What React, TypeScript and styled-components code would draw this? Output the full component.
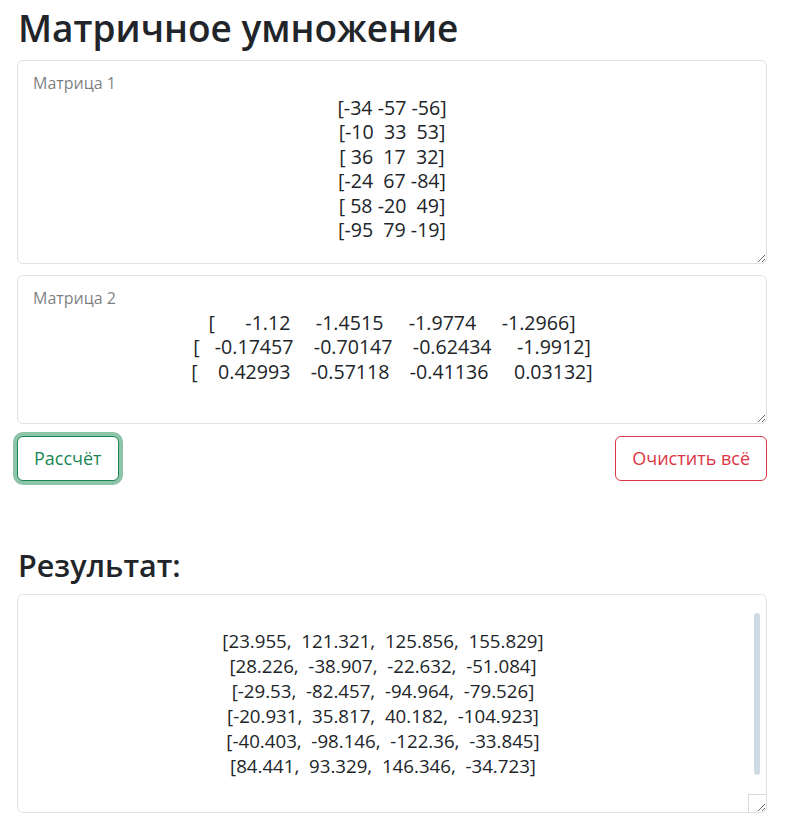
import React from "react";
import styled, { createGlobalStyle } from "styled-components";

const GlobalStyle = createGlobalStyle`
  html, body { margin: 0; padding: 0; background: #fff; }
  body {
    font-family: "Open Sans", "Noto Sans", sans-serif;
    color: #212529;
  }
  * { box-sizing: border-box; }
`;

const Page = styled.main`
  display: flex;
  flex-direction: column;
  padding: 0 20px 0 17px;
`;

const Title = styled.h1`
  margin: 4px 0 8px 1px;
  font-size: 37px;
  line-height: 48px;
  font-weight: 600;
  color: #212529;
`;

const SubTitle = styled.h2`
  margin: 63px 0 8px 1px;
  font-size: 30.5px;
  line-height: 42px;
  font-weight: 600;
  color: #212529;
`;

const Field = styled.div<{ $gap: number }>`
  position: relative;
  margin-bottom: ${(p) => p.$gap}px;
`;

const FieldLabel = styled.label`
  position: absolute;
  top: 13px;
  left: 16px;
  font-size: 16px;
  line-height: 20px;
  color: rgba(33, 37, 41, 0.6);
  pointer-events: none;
`;

const MatrixArea = styled.textarea<{ $height: number }>`
  display: block;
  width: 100%;
  height: ${(p) => p.$height}px;
  margin: 0;
  padding: 35px 12px 8px;
  border: 1px solid #dee2e6;
  border-radius: 6px;
  background: #fff;
  color: #212529;
  font-family: "Open Sans", "Noto Sans", sans-serif;
  font-size: 19.6px;
  line-height: 24.4px;
  text-align: center;
  white-space: pre-wrap;
  outline: none;
  overflow: auto;
`;

const ResultArea = styled.textarea`
  display: block;
  width: 100%;
  height: 219px;
  margin: 0;
  padding: 33px 30px 10px 12px;
  border: 1px solid #dee2e6;
  border-radius: 6px;
  background: #fff;
  color: #212529;
  font-family: "Open Sans", "Noto Sans", sans-serif;
  font-size: 18.7px;
  line-height: 25px;
  text-align: center;
  white-space: pre-wrap;
  outline: none;
  overflow: hidden;
`;

const ScrollThumb = styled.div`
  position: absolute;
  top: 19px;
  right: 7px;
  width: 6px;
  height: 162px;
  border-radius: 3px;
  background: #cfdbe3;
  pointer-events: none;
`;

const ScrollCorner = styled.div`
  position: absolute;
  right: 0;
  bottom: 0;
  width: 19px;
  height: 19px;
  border-top: 1px solid #d9d9d9;
  border-left: 1px solid #d9d9d9;
  pointer-events: none;
`;

const Actions = styled.div`
  display: flex;
  justify-content: space-between;
  align-items: center;
  margin-top: 12px;
`;

const OutlineButton = styled.button<{ $tone: "success" | "danger"; $focused?: boolean }>`
  font-family: "Open Sans", "Noto Sans", sans-serif;
  font-size: 18px;
  line-height: 27px;
  padding: 8px 16px;
  border-radius: 6px;
  background: #fff;
  cursor: pointer;
  color: ${(p) => (p.$tone === "success" ? "#198754" : "#dc3545")};
  border: 1px solid ${(p) => (p.$tone === "success" ? "#198754" : "#dc3545")};
  box-shadow: ${(p) => (p.$focused ? "0 0 0 4px rgba(25, 135, 84, 0.5)" : "none")};
`;

const matrix1 = [
  "[-34 -57 -56]",
  "[-10  33  53]",
  "[ 36  17  32]",
  "[-24  67 -84]",
  "[ 58 -20  49]",
  "[-95  79 -19]",
].join("\n");

const matrix2 = [
  "[      -1.12     -1.4515     -1.9774     -1.2966]",
  "[   -0.17457    -0.70147    -0.62434     -1.9912]",
  "[    0.42993    -0.57118    -0.41136     0.03132]",
].join("\n");

const result = [
  "[23.955,  121.321,  125.856,  155.829]",
  "[28.226,  -38.907,  -22.632,  -51.084]",
  "[-29.53,  -82.457,  -94.964,  -79.526]",
  "[-20.931,  35.817,  40.182,  -104.923]",
  "[-40.403,  -98.146,  -122.36,  -33.845]",
  "[84.441,  93.329,  146.346,  -34.723]",
].join("\n");

export default function App() {
  return (
    <>
      <GlobalStyle />
      <Page>
        <Title>Матричное умножение</Title>
        <Field $gap={11}>
          <FieldLabel>Матрица 1</FieldLabel>
          <MatrixArea $height={204} defaultValue={matrix1} spellCheck={false} />
        </Field>
        <Field $gap={0}>
          <FieldLabel>Матрица 2</FieldLabel>
          <MatrixArea $height={149} defaultValue={matrix2} spellCheck={false} />
        </Field>
        <Actions>
          <OutlineButton $tone="success" $focused>
            Рассчёт
          </OutlineButton>
          <OutlineButton $tone="danger">Очистить всё</OutlineButton>
        </Actions>
        <SubTitle>Результат:</SubTitle>
        <Field $gap={0}>
          <ResultArea readOnly defaultValue={result} spellCheck={false} />
          <ScrollThumb />
          <ScrollCorner />
        </Field>
      </Page>
    </>
  );
}
